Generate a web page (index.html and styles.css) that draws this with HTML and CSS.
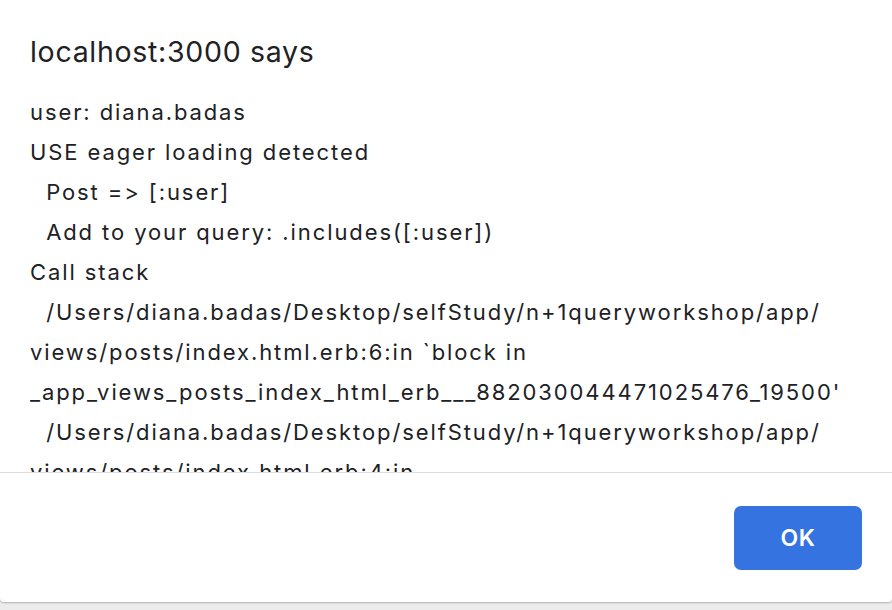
FILE: index.html
```html
<!DOCTYPE html>
<html lang="en">
<head>
<meta charset="utf-8">
<title>localhost:3000 says</title>
<link rel="stylesheet" href="styles.css">
</head>
<body>
<div class="dialog">
  <div class="content">
    <h1 class="title">localhost:3000 says</h1>
    <div class="message">
      <div class="line">user: diana.badas</div>
      <div class="line">USE eager loading detected</div>
      <div class="line">  Post =&gt; [:user]</div>
      <div class="line">  Add to your query: .includes([:user])</div>
      <div class="line">Call stack</div>
      <div class="line">  /Users/diana.badas/Desktop/selfStudy/n+1queryworkshop/app/</div>
      <div class="line">views/posts/index.html.erb:6:in `block in</div>
      <div class="line">_app_views_posts_index_html_erb___882030044471025476_19500'</div>
      <div class="line">  /Users/diana.badas/Desktop/selfStudy/n+1queryworkshop/app/</div>
      <div class="line">views/posts/index.html.erb:4:in</div>
      <div class="line">`_app_views_posts_index_html_erb___882030044471025476_19500'</div>
    </div>
  </div>
  <div class="footer">
    <button class="ok">OK</button>
  </div>
</div>
</body>
</html>
```

FILE: styles.css
```css
html, body {
  margin: 0;
  padding: 0;
}
body {
  width: 892px;
  height: 610px;
  background: linear-gradient(#d2d2d2, #e8e8e8 4px, #ececec);
  font-family: Inter, "Noto Sans", "Liberation Sans", sans-serif;
  font-variant-ligatures: none;
  font-feature-settings: "liga" 0, "calt" 0;
  color: #202124;
  overflow: hidden;
}
.dialog {
  width: 892px;
  height: 602px;
  background: #ffffff;
  border-radius: 0 0 4px 4px;
  box-shadow: 0 1px 2px rgba(0,0,0,0.25);
  display: flex;
  flex-direction: column;
}
.content {
  padding: 35px 30px 0 30px;
  display: flex;
  flex-direction: column;
}
.title {
  margin: 0;
  font-size: 28.5px;
  line-height: 34px;
  letter-spacing: 0.7px;
  font-weight: 400;
  color: #202124;
}
.message {
  margin-top: 23px;
  height: 380px;
  overflow: hidden;
  font-size: 22px;
  line-height: 40px;
  letter-spacing: 1.9px;
}
.line {
  white-space: pre;
}
.footer {
  flex: 1;
  border-top: 1px solid #dcdce0;
  display: flex;
  justify-content: flex-end;
  align-items: flex-start;
  padding: 33px 30px 0 0;
}
.ok {
  width: 128px;
  height: 64px;
  border: none;
  border-radius: 7px;
  background: #3574e0;
  color: #ffffff;
  font-family: Inter, "Noto Sans", "Liberation Sans", sans-serif;
  font-size: 23px;
  font-weight: 600;
  letter-spacing: 0.6px;
  padding: 0;
}
```
